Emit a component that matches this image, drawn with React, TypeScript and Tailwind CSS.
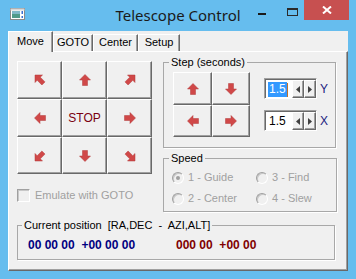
import React from "react";

const F = "font-['Liberation_Sans',Arial,sans-serif]";

type Dir = "n" | "s" | "e" | "w" | "nw" | "ne" | "se" | "sw";

function Arrow({ dir }: { dir: Dir }) {
  const rotMap: Record<Dir, number> = { n: 0, e: 90, s: 180, w: 270, nw: 0, ne: 90, se: 180, sw: 270 };
  const rot = rotMap[dir];
  const diag = dir.length === 2;
  return (
    <svg width="12" height="12" viewBox="0 0 12 12">
      <g transform={`rotate(${rot} 6 6)`}>
        {diag ? (
          <path
            d="M1 1 H8.5 L6.3 3.2 L11 7.9 L7.9 11 L3.2 6.3 L1 8.5 Z"
            fill="#d04848"
            stroke="#b23a3a"
            strokeWidth="0.5"
          />
        ) : (
          <path
            d="M6 0.5 L11.5 6 H8.5 V11.5 H3.5 V6 H0.5 Z"
            fill="#d04848"
            stroke="#b23a3a"
            strokeWidth="0.5"
          />
        )}
      </g>
    </svg>
  );
}

const raised =
  "flex items-center justify-center bg-[#f0f0f0] border border-t-white border-l-white border-r-[#696969] border-b-[#696969] shadow-[inset_-1px_-1px_0_#a0a0a0]";

function Tab({ label, w, selected }: { label: string; w: string; selected?: boolean }) {
  return (
    <div
      className={`${w} ${
        selected ? "h-[21px] mb-[-1px] relative z-10 pt-[3px]" : "h-[17px] pt-[1px]"
      } bg-[#f0f0f0] border-t border-l border-r border-t-white border-l-white border-r-[#696969] shadow-[inset_-1px_0_0_#a0a0a0] text-[11px] leading-[13px] text-center text-black`}
    >
      {label}
    </div>
  );
}

function Spin({ selected, label }: { selected?: boolean; label: string }) {
  return (
    <div className="flex items-center">
      <div className="flex w-[53px] h-[21px] border border-t-[#a0a0a0] border-l-[#a0a0a0] border-r-white border-b-white shadow-[inset_1px_1px_0_#696969]">
        <div className="flex-1 bg-white flex items-center pl-[2px] pt-[1px] ml-[1px] mt-[1px]">
          {selected ? (
            <div className="flex items-center">
              <span className="bg-[#3399ff] text-white text-[12px] leading-[15px] px-[1px]">1.5</span>
              <span className="w-[1px] h-[14px] bg-[#c0702a]" />
            </div>
          ) : (
            <span className="text-black text-[12px] leading-[15px] px-[1px]">1.5</span>
          )}
        </div>
        <div className={`${raised} w-[12px] mt-[1px]`}>
          <svg width="4" height="7" viewBox="0 0 4 7">
            <path d="M4 0 V7 L0 3.5 Z" fill="#404040" />
          </svg>
        </div>
        <div className={`${raised} w-[12px] mt-[1px]`}>
          <svg width="4" height="7" viewBox="0 0 4 7">
            <path d="M0 0 V7 L4 3.5 Z" fill="#404040" />
          </svg>
        </div>
      </div>
      <span className="ml-[3px] text-[12px] text-[#1c1c80]">{label}</span>
    </div>
  );
}

function Radio({ checked, label }: { checked?: boolean; label: string }) {
  return (
    <div className="flex items-center h-[13px]">
      <span className="w-[12px] h-[12px] rounded-full border border-t-[#a0a0a0] border-l-[#a0a0a0] border-r-white border-b-white bg-[#f0f0f0] flex items-center justify-center shadow-[inset_1px_1px_0_#c8c8c8]">
        {checked && <span className="w-[4px] h-[4px] rounded-full bg-[#a0a0a0]" />}
      </span>
      <span className="ml-[4px] text-[11px] text-[#a0a0a0]">{label}</span>
    </div>
  );
}

const legend = "ml-[5px] px-[2px] text-[11px] leading-[13px] text-black font-normal";

export default function App() {
  return (
    <div className={`${F} w-[356px] h-[279px] bg-[#66bdee] flex flex-col overflow-hidden`}>
      {/* Title bar */}
      <div className="h-[31px] grid grid-cols-[1fr_auto_1fr]">
        <div className="pl-[10px] pt-[8px]">
          <svg width="15" height="12" viewBox="0 0 15 12">
            <rect x="0.5" y="0.5" width="14" height="11" fill="#ffffff" stroke="#8a8a8a" />
            <rect x="2" y="3" width="8" height="7" fill="#4f9a8a" />
            <rect x="2" y="3" width="8" height="3" fill="#7fb8c8" />
            <rect x="11.5" y="3" width="1.5" height="3" fill="#3a6fd0" />
            <rect x="11.5" y="8" width="1.5" height="2" fill="#3a6fd0" />
            <rect x="0.5" y="0.5" width="14" height="2" fill="#d8d8d8" />
          </svg>
        </div>
        <div className="pt-[5px] text-[15px] leading-[20px] text-[#1a1a1a] font-['Noto_Sans',sans-serif]">
          Telescope Control
        </div>
        <div className="flex justify-end items-start pr-[7px]">
          <div className="mt-[13px] w-[8px] h-[2px] bg-[#1a1a1a]" />
          <div className="ml-[21px] mt-[8px] w-[11px] h-[8px] border border-[#2a2a2a] border-t-2" />
          <div className="ml-[6px] w-[45px] h-[20px] bg-[#c75050] flex items-center justify-center">
            <svg width="10" height="8" viewBox="0 0 10 8">
              <path d="M1 0.5 L9 7.5 M9 0.5 L1 7.5" stroke="#ffffff" strokeWidth="2" />
            </svg>
          </div>
        </div>
      </div>

      {/* Client */}
      <div className="flex-1 mx-[8px] mb-[8px] bg-[#f0f0f0] flex flex-col">
        <div className="flex items-end h-[20px]">
          <Tab label="Move" w="w-[45px]" selected />
          <Tab label="GOTO" w="w-[40px]" />
          <Tab label="Center" w="w-[45px]" />
          <Tab label="Setup" w="w-[42px]" />
        </div>
        <div className="flex-1 border border-t-white border-l-white border-r-[#696969] border-b-[#696969] shadow-[inset_-1px_-1px_0_#a0a0a0] flex flex-col pl-[8px] pt-[4px]">
          <div className="flex items-start">
            {/* Left column */}
            <div className="mt-[5px] w-[135px] flex flex-col">
              <div className="grid grid-cols-[45px_45px_45px] grid-rows-[38px_38px_37px]">
                <div className={raised}><Arrow dir="nw" /></div>
                <div className={raised}><Arrow dir="n" /></div>
                <div className={raised}><Arrow dir="ne" /></div>
                <div className={raised}><Arrow dir="w" /></div>
                <div className={raised}>
                  <span className="text-[12px] text-[#7a0010]">STOP</span>
                </div>
                <div className={raised}><Arrow dir="e" /></div>
                <div className={raised}><Arrow dir="sw" /></div>
                <div className={raised}><Arrow dir="s" /></div>
                <div className={raised}><Arrow dir="se" /></div>
              </div>
              <div className="mt-[13px] flex items-center">
                <span className="w-[13px] h-[13px] border border-t-[#a0a0a0] border-l-[#a0a0a0] border-r-white border-b-white shadow-[inset_1px_1px_0_#c8c8c8] bg-[#f0f0f0]" />
                <span className="ml-[5px] text-[11px] text-[#a0a0a0]">Emulate with GOTO</span>
              </div>
            </div>

            {/* Right column */}
            <div className="ml-[11px] w-[173px] flex flex-col">
              <fieldset className="border border-[#a8a8a8] shadow-[1px_1px_0_#ffffff]">
                <legend className={legend}>Step (seconds)</legend>
                <div className="flex pl-[9px] pt-[3px] pb-[10px]">
                  <div className="grid grid-cols-[39px_38px] grid-rows-[33px_32px]">
                    <div className={raised}><Arrow dir="n" /></div>
                    <div className={raised}><Arrow dir="s" /></div>
                    <div className={raised}><Arrow dir="w" /></div>
                    <div className={raised}><Arrow dir="e" /></div>
                  </div>
                  <div className="ml-[14px] flex flex-col">
                    <div className="mt-[6px]">
                      <Spin selected label="Y" />
                    </div>
                    <div className="mt-[11px]">
                      <Spin label="X" />
                    </div>
                  </div>
                </div>
              </fieldset>
              <fieldset className="mt-[4px] border border-[#a8a8a8] shadow-[1px_1px_0_#ffffff]">
                <legend className={legend}>Speed</legend>
                <div className="grid grid-cols-[84px_80px] gap-y-[8px] pl-[8px] pt-[6px] pb-[6px]">
                  <Radio checked label="1 - Guide" />
                  <Radio label="3 - Find" />
                  <Radio label="2 - Center" />
                  <Radio label="4 - Slew" />
                </div>
              </fieldset>
            </div>
          </div>

          <fieldset className="mt-[7px] w-[318px] border border-[#a8a8a8] shadow-[1px_1px_0_#ffffff]">
            <legend className="ml-[4px] px-[2px] text-[11px] leading-[13px] text-black font-normal whitespace-pre">
              Current position  [RA,DEC  -  AZI,ALT]
            </legend>
            <div className="flex text-[12px] leading-[14px] font-bold whitespace-pre pl-[10px] pt-[6px] pb-[7px]">
              <span className="w-[148px] text-[#000080]">00 00 00  +00 00 00</span>
              <span className="text-[#800000]">000 00  +00 00</span>
            </div>
          </fieldset>
        </div>
      </div>
    </div>
  );
}
